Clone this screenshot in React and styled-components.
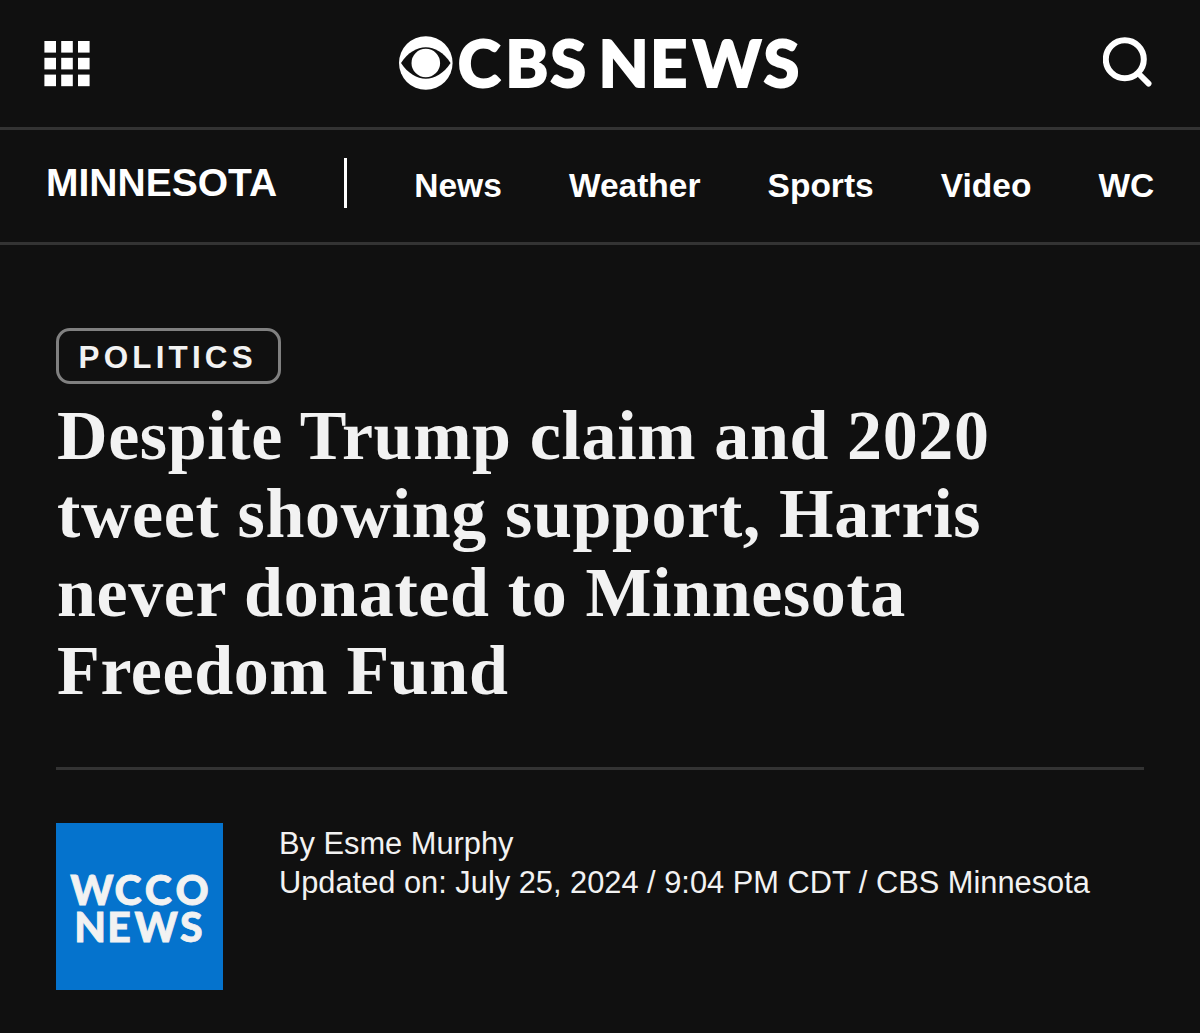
import React from 'react'
import styled, { createGlobalStyle } from 'styled-components';

const links = ['News', 'Weather', 'Sports', 'Video', 'WCCO'];

function GridIcon() {
  const steps = [0, 16.8, 33.6];
  return (
    <svg width="46" height="46" viewBox="0 0 46 46" fill="#fff">
      {steps.map((y) => steps.map((x) => (
        <rect key={`${x}-${y}`} x={x + 0.4} y={y} width="11.6" height="11.6" />
      )))}
    </svg>
  )
}

function SearchIcon() {
  return (
    <svg width="53" height="53" viewBox="0 0 53 53" fill="none" stroke="#fff" strokeLinecap="round">
      <circle cx="21.8" cy="22.3" r="19" strokeWidth="6" />
      <path d="M36 37L45.6 46.6" strokeWidth="5.8" />
    </svg>
  )
}

function CbsLogo() {
  return (
    <Logo width="410" height="60" viewBox="0 0 410 60">
      <circle cx="26.8" cy="30" r="26.8" fill="#fff" />
      <path d="M2 30C9 19.5 18 14.3 26.8 14.3S44.6 19.5 51.6 30C44.6 40.5 35.6 45.7 26.8 45.7S9 40.5 2 30Z" fill="#101010" />
      <circle cx="26.8" cy="30" r="14.3" fill="#fff" />
      <LogoText x="58.8 106.2 151.2" y="53.9">CBS</LogoText>
      <LogoText x="199.6 251 293.8 364.4" y="53.9">NEWS</LogoText>
    </Logo>
  )
}

function App() {
  return (
    <Page>
      <GlobalStyle />
      <Header>
        <GridIcon />
        <CbsLogo />
        <SearchIcon />
      </Header>

      <Nav>
        <Region>MINNESOTA</Region>
        <Divider />
        <Links>
          {links.map((link) => <a key={link}>{link}</a>)}
        </Links>
      </Nav>

      <Article>
        <Tag>POLITICS</Tag>
        <Title>
          Despite Trump claim and 2020<br />
          tweet showing support, Harris<br />
          never donated to Minnesota<br />
          Freedom Fund
        </Title>
        <Author>
          <Station>
            <svg width="167" height="167" viewBox="0 0 167 167">
              <StationText x="14.3 58.6 88.8 119.4" y="81.6">WCCO</StationText>
              <StationText x="18.2 51.2 78.6 124" y="119">NEWS</StationText>
            </svg>
          </Station>
          <Byline>
            <p>By Esme Murphy</p>
            <p>Updated on: July 25, 2024 / 9:04 PM CDT / CBS Minnesota</p>
          </Byline>
        </Author>
      </Article>
    </Page>
  )
}

export default App;


const GlobalStyle = createGlobalStyle`
    * {
        box-sizing: border-box;
    }

    body, p, h1 {
        margin: 0;
    }

    body {
        background: #101010;
    }

    svg {
        display: block;
    }
`

const Page = styled.div`
    width: 1200px;
    height: 1033px;
    overflow: hidden;
    background: #101010;
    color: #fff;
    font-family: "Liberation Sans", Arial, sans-serif;
`

const Header = styled.header`
    display: flex;
    justify-content: space-between;
    align-items: center;
    height: 130px;
    padding: 0 44px;
    border-bottom: 3px solid #333;
`

const Logo = styled.svg`
    margin: 0 -15px 1px 0;
`

const LogoText = styled.text`
    font: 900 65px Lato, sans-serif;
    fill: #fff;
    stroke: #fff;
    stroke-width: 1.8px;
`

const Nav = styled.nav`
    display: flex;
    align-items: center;
    height: 115px;
    padding: 0 45px 6px 46px;
    border-bottom: 3px solid #333;
`

const Region = styled.div`
    width: 298px;
    font-size: 39px;
    font-weight: bold;
    line-height: 44px;
`

const Divider = styled.div`
    flex: none;
    width: 3px;
    height: 50px;
    margin-right: 67.3px;
    background: #fff;
`

const Links = styled.div`
    display: flex;
    flex: 1;
    gap: 67.1px;
    min-width: 0;
    overflow: hidden;
    padding-top: 5px;
    font-size: 33.5px;
    font-weight: bold;
    line-height: 40px;
`

const Article = styled.article`
    padding: 83px 56px 0;
    color: #f2f2f2;
`

const Tag = styled.div`
    width: 225px;
    height: 56px;
    padding-left: 19.5px;
    border: 3px solid #808080;
    border-radius: 14px;
    font-size: 31.4px;
    font-weight: bold;
    line-height: 53px;
    letter-spacing: 4.2px;
`

const Title = styled.h1`
    padding: 13px 0 56px 1px;
    border-bottom: 3px solid #333;
    font: bold 70px/78.4px "Liberation Serif", "Times New Roman", serif;
    letter-spacing: 0.62px;
`

const Author = styled.div`
    display: flex;
    gap: 56px;
    padding-top: 53px;
`

const Byline = styled.div`
    padding-top: 1px;
    font-size: 30.8px;
    line-height: 39.2px;
    white-space: nowrap;
`

const Station = styled.div`
    width: 167px;
    height: 167px;
    background: #0573cd;
`

const StationText = styled.text`
    font: 900 41px Lato, sans-serif;
    fill: #f2f2f2;
    stroke: #f2f2f2;
    stroke-width: 0.8px;
`
